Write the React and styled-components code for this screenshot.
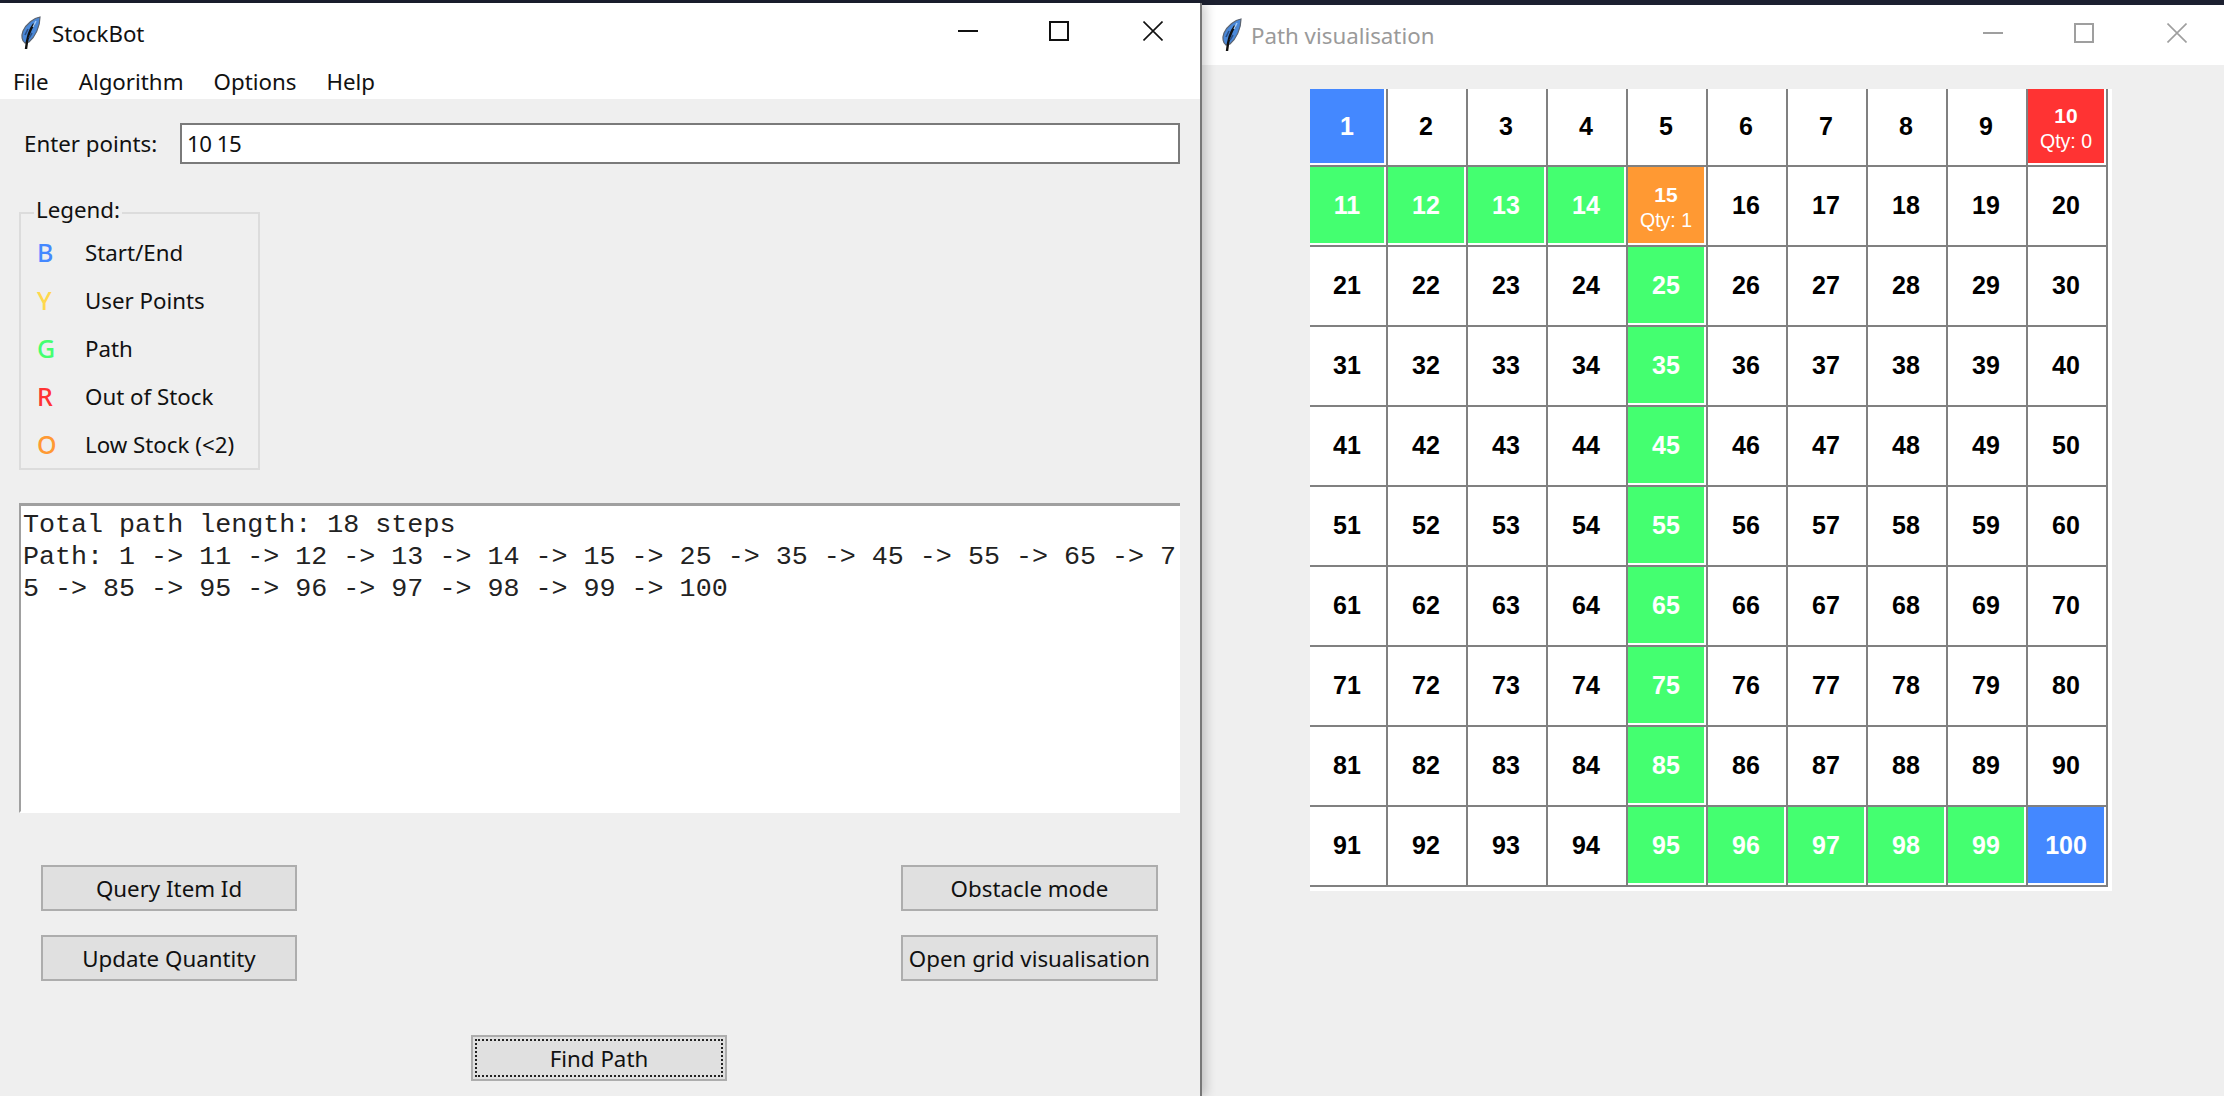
import React from "react";
import styled, { createGlobalStyle } from "styled-components";

const GlobalStyle = createGlobalStyle`
  html, body { margin: 0; padding: 0; background: #1c2030; }
  * { box-sizing: border-box; }
`;

const UI = `"Noto Sans", "Open Sans", sans-serif`;

const Desktop = styled.div`
  display: flex;
  width: 2224px;
  height: 1096px;
  overflow: hidden;
  background: #1c2030;
  font-family: ${UI};
  font-size: 22.3px;
  color: #111;
`;
const MainWindow = styled.section`
  position: relative;
  z-index: 1;
  flex: 0 0 1202px;
  margin-top: 3px;
  display: flex;
  flex-direction: column;
  background: #efefef;
  border-right: 2px solid #777;
  box-shadow: 4px 0 10px rgba(0, 0, 0, 0.2);
`;
const SideWindow = styled.section`
  flex: 1;
  margin-top: 5px;
  background: #efefef;
`;
const TitleBar = styled.header`
  height: 60px;
  display: flex;
  align-items: center;
  background: #fff;
  padding: 0 37px 0 ${(p) => p.$inset}px;
`;
const Title = styled.span`
  margin-left: ${(p) => p.$gap}px;
  color: ${(p) => (p.$dim ? "#9a9a9a" : "#111")};
`;
const Controls = styled.div`
  margin-left: auto;
  align-self: flex-start;
  margin-top: 18px;
  display: flex;
  color: ${(p) => (p.$dim ? "#9f9f9f" : "#111")};
  svg { display: block; width: 20px; height: 20px; }
  svg:nth-child(2) { margin-left: 71px; }
  svg:nth-child(3) { margin-left: ${(p) => (p.$dim ? 73 : 74)}px; }
`;
const MenuBar = styled.nav`
  height: 36px;
  display: flex;
  align-items: center;
  background: #fff;
  padding-left: 13px;
  gap: 30px;
`;
const InputRow = styled.div`
  display: flex;
  align-items: center;
  margin-top: 24px;
  padding-left: 24px;
`;
const FieldLabel = styled.label`
  flex: 0 0 156px;
`;
const PointsInput = styled.div`
  width: 1000px;
  height: 41px;
  display: flex;
  align-items: center;
  padding-left: 5px;
  background: #fff;
  border: 2px solid #7a7a7a;
  letter-spacing: -0.5px;
`;
const LegendBox = styled.div`
  position: relative;
  width: 241px;
  height: 258px;
  margin: 48px 0 0 19px;
  padding-top: 14px;
  border: 2px solid #dcdcdc;
`;
const LegendTitle = styled.span`
  position: absolute;
  top: -18px;
  left: 13px;
  padding: 0 2px;
  line-height: 28px;
  background: #efefef;
`;
const LegendRow = styled.div`
  height: 48px;
  display: flex;
  align-items: center;
  padding-left: 16px;
`;
const LegendKey = styled.span`
  flex: 0 0 48px;
  font-size: 25px;
  font-weight: 500;
  color: ${(p) => p.$color};
`;
const OutputBox = styled.div`
  height: 310px;
  margin: 33px 20px 0 19px;
  padding: 3px 0 0 2px;
  overflow: hidden;
  background: #fff;
  border-top: 3px solid #a0a0a0;
  border-left: 2px solid #a0a0a0;
  border-bottom: 2px solid #fff;
  font-family: "Liberation Mono", "Courier New", monospace;
  font-size: 26.7px;
  line-height: 32px;
  color: #222;
`;
const OutputLine = styled.div`
  white-space: pre;
`;
const ButtonRow = styled.div`
  display: flex;
  justify-content: space-between;
  margin-top: ${(p) => p.$top}px;
  padding: 0 42px 0 41px;
`;
const ActionButton = styled.button`
  width: ${(p) => p.$width || 256}px;
  height: 46px;
  padding: 0;
  background: #e0e0e0;
  border: 2px solid #adadad;
  font: inherit;
  color: #111;
  white-space: nowrap;
`;
const FindButton = styled(ActionButton)`
  align-self: flex-start;
  margin: 54px 0 0 471px;
  outline: 2px dotted #222;
  outline-offset: -6px;
`;
const GridWrap = styled.div`
  width: 802px;
  height: 802px;
  margin: 24px 0 0 108px;
  padding: 0 4px 4px 0;
  background: #fff;
  display: grid;
  grid-template-columns: 78px repeat(9, 80px);
  grid-template-rows: 78px repeat(9, 80px);
  font-family: "Liberation Sans", Arial, sans-serif;
`;
const Cell = styled.div`
  display: flex;
  flex-direction: column;
  align-items: center;
  justify-content: center;
  padding: 0 2px 2px 0;
  border-right: 2px solid #808080;
  border-bottom: 2px solid #808080;
  background: ${(p) => p.$fill || "#fff"};
  background-clip: content-box;
  color: ${(p) => (p.$fill ? "#fff" : "#000")};
`;
const CellNumber = styled.span`
  font-weight: 700;
  font-size: ${(p) => (p.$small ? 21 : 25)}px;
  line-height: ${(p) => (p.$small ? 24 : 28)}px;
  margin-top: ${(p) => (p.$small ? 6 : 0)}px;
`;
const CellQty = styled.span`
  font-size: 19.5px;
  line-height: 26px;
`;

const Feather = () => (
  <svg width="22" height="34" viewBox="0 0 22 34" aria-hidden="true">
    <path d="M20 1 C14 2 6 8 3 15 C1 20 2 25 5 27 L9 26 C15 21 20 11 20 1 Z" fill="#4a88d8" stroke="#5c6470" strokeWidth="1.2" />
    <path d="M14 8 C10 13 7 22 6 33" fill="none" stroke="#101010" strokeWidth="2.4" />
    <path d="M8 13 L5 19 M12 17 L9 22" stroke="#2a4f86" strokeWidth="1.6" />
    <path d="M16 5 L13 11" stroke="#a8ccf2" strokeWidth="1.4" />
  </svg>
);
const MinIcon = () => (
  <svg viewBox="0 0 20 20"><path d="M0 9h20v2H0z" fill="currentColor" /></svg>
);
const MaxIcon = () => (
  <svg viewBox="0 0 20 20"><rect x="1" y="1" width="18" height="18" fill="none" stroke="currentColor" strokeWidth="2" /></svg>
);
const CloseIcon = () => (
  <svg viewBox="0 0 20 20"><path d="M0.5 0.5L19.5 19.5M19.5 0.5L0.5 19.5" fill="none" stroke="currentColor" strokeWidth="1.6" /></svg>
);

const COLORS = { blue: "#4488ff", green: "#44ff70", red: "#ff3333", orange: "#ff9933" };
const PATH = new Set([11, 12, 13, 14, 25, 35, 45, 55, 65, 75, 85, 95, 96, 97, 98, 99]);
const QTY = { 10: 0, 15: 1 };
const fillFor = (n) => {
  if (n === 1 || n === 100) return COLORS.blue;
  if (n === 10) return COLORS.red;
  if (n === 15) return COLORS.orange;
  if (PATH.has(n)) return COLORS.green;
  return null;
};
const LEGEND = [
  ["B", "Start/End", COLORS.blue],
  ["Y", "User Points", "#ffd84d"],
  ["G", "Path", COLORS.green],
  ["R", "Out of Stock", COLORS.red],
  ["O", "Low Stock (<2)", COLORS.orange],
];

export default function App() {
  return (
    <Desktop>
      <GlobalStyle />
      <MainWindow>
        <TitleBar $inset={20}>
          <Feather />
          <Title $gap={10}>StockBot</Title>
          <Controls><MinIcon /><MaxIcon /><CloseIcon /></Controls>
        </TitleBar>
        <MenuBar>
          <span>File</span><span>Algorithm</span><span>Options</span><span>Help</span>
        </MenuBar>
        <InputRow>
          <FieldLabel>Enter points:</FieldLabel>
          <PointsInput>10 15</PointsInput>
        </InputRow>
        <LegendBox>
          <LegendTitle>Legend:</LegendTitle>
          {LEGEND.map(([k, label, color]) => (
            <LegendRow key={k}>
              <LegendKey $color={color}>{k}</LegendKey>
              <span>{label}</span>
            </LegendRow>
          ))}
        </LegendBox>
        <OutputBox>
          <OutputLine>Total path length: 18 steps</OutputLine>
          <OutputLine>Path: 1 -&gt; 11 -&gt; 12 -&gt; 13 -&gt; 14 -&gt; 15 -&gt; 25 -&gt; 35 -&gt; 45 -&gt; 55 -&gt; 65 -&gt; 7</OutputLine>
          <OutputLine>5 -&gt; 85 -&gt; 95 -&gt; 96 -&gt; 97 -&gt; 98 -&gt; 99 -&gt; 100</OutputLine>
        </OutputBox>
        <ButtonRow $top={52}>
          <ActionButton>Query Item Id</ActionButton>
          <ActionButton $width={257}>Obstacle mode</ActionButton>
        </ButtonRow>
        <ButtonRow $top={24}>
          <ActionButton>Update Quantity</ActionButton>
          <ActionButton $width={257}>Open grid visualisation</ActionButton>
        </ButtonRow>
        <FindButton>Find Path</FindButton>
      </MainWindow>
      <SideWindow>
        <TitleBar $inset={19}>
          <Feather />
          <Title $gap={8} $dim>Path visualisation</Title>
          <Controls $dim><MinIcon /><MaxIcon /><CloseIcon /></Controls>
        </TitleBar>
        <GridWrap>
          {Array.from({ length: 100 }, (_, i) => i + 1).map((n) => {
            const hasQty = n in QTY;
            return (
              <Cell key={n} $fill={fillFor(n)}>
                <CellNumber $small={hasQty}>{n}</CellNumber>
                {hasQty && <CellQty>Qty: {QTY[n]}</CellQty>}
              </Cell>
            );
          })}
        </GridWrap>
      </SideWindow>
    </Desktop>
  );
}
